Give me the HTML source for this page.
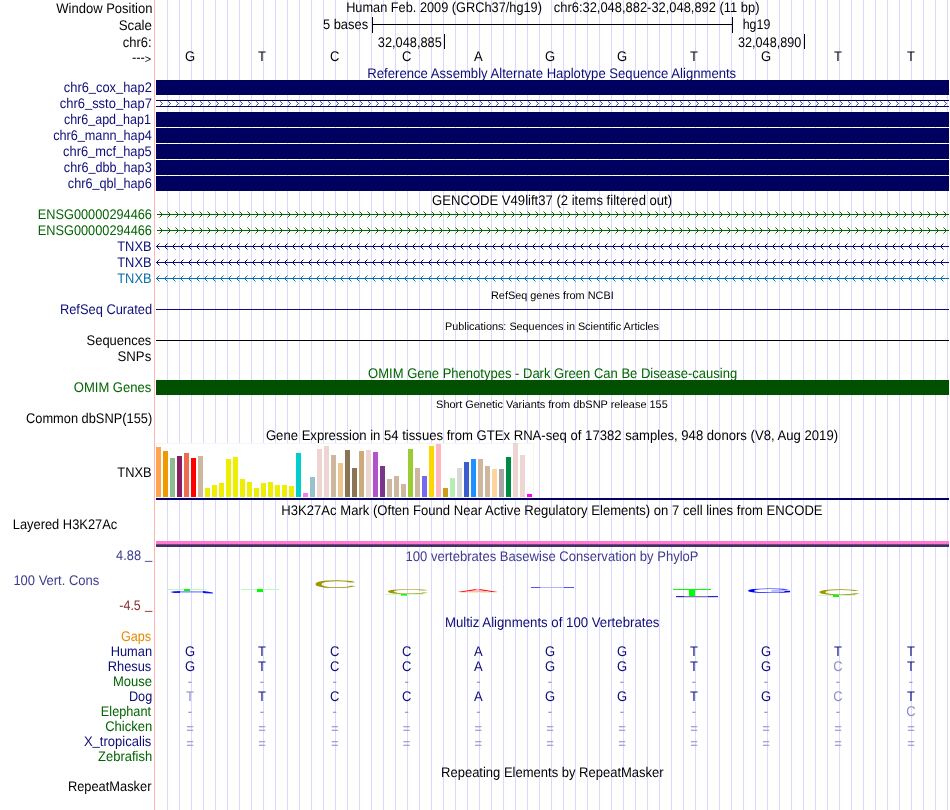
<!DOCTYPE html>
<html lang="en">
<head>
<meta charset="utf-8">
<title>UCSC Genome Browser - hg19 chr6:32,048,882-32,048,892</title>
<style>
html,body{margin:0;padding:0;background:#fff;}
body{width:950px;height:810px;overflow:hidden;}
svg{display:block;font-family:"Liberation Sans", Arial, Helvetica, sans-serif;will-change:transform;text-rendering:geometricPrecision;}
text{white-space:pre;}
</style>
</head>
<body>
<svg width="950" height="810" viewBox="0 0 950 810">
<rect x="0" y="0" width="950" height="810" fill="#fff"/>
<path d="M167.5 0V810M179.5 0V810M191.5 0V810M203.5 0V810M215.5 0V810M227.5 0V810M239.5 0V810M251.5 0V810M263.5 0V810M275.5 0V810M287.5 0V810M299.5 0V810M311.5 0V810M323.5 0V810M335.5 0V810M347.5 0V810M359.5 0V810M371.5 0V810M383.5 0V810M395.5 0V810M407.5 0V810M419.5 0V810M431.5 0V810M443.5 0V810M455.5 0V810M467.5 0V810M479.5 0V810M491.5 0V810M503.5 0V810M515.5 0V810M527.5 0V810M539.5 0V810M551.5 0V810M563.5 0V810M575.5 0V810M587.5 0V810M599.5 0V810M611.5 0V810M623.5 0V810M635.5 0V810M647.5 0V810M659.5 0V810M671.5 0V810M683.5 0V810M695.5 0V810M707.5 0V810M719.5 0V810M731.5 0V810M743.5 0V810M755.5 0V810M767.5 0V810M779.5 0V810M791.5 0V810M803.5 0V810M815.5 0V810M827.5 0V810M839.5 0V810M851.5 0V810M863.5 0V810M875.5 0V810M887.5 0V810M899.5 0V810M911.5 0V810M923.5 0V810M935.5 0V810M947.5 0V810" stroke="#d9d9ff" stroke-width="1" fill="none"/>
<path d="M154.5 0V810" stroke="#ffb4b4" stroke-width="1" fill="none"/>
<text x="56.34" y="13" fill="#000" font-size="14" textLength="96.12" lengthAdjust="spacingAndGlyphs">Window Position</text>
<text x="118.69" y="30" fill="#000" font-size="14" textLength="33.30" lengthAdjust="spacingAndGlyphs">Scale</text>
<text x="122.83" y="47" fill="#000" font-size="14" textLength="28.79" lengthAdjust="spacingAndGlyphs">chr6:</text>
<text x="131.90" y="63" fill="#000" font-size="14" textLength="19.26" lengthAdjust="spacingAndGlyphs"><tspan dy="-0.7">---</tspan><tspan dy="0.4" font-size="11.8">&gt;</tspan></text>
<text x="346.15" y="12" fill="#000" font-size="14" textLength="195.80" lengthAdjust="spacingAndGlyphs">Human Feb. 2009 (GRCh37/hg19)</text>
<text x="553.83" y="12" fill="#000" font-size="14" textLength="205.65" lengthAdjust="spacingAndGlyphs">chr6:32,048,882-32,048,892 (11 bp)</text>
<text x="322.92" y="29" fill="#000" font-size="14" textLength="45.23" lengthAdjust="spacingAndGlyphs">5 bases</text>
<path d="M372.5 17V33M732.5 17V33M372 24.5H733" stroke="#000" stroke-width="1" fill="none"/>
<text x="742.68" y="29" fill="#000" font-size="14" textLength="27.64" lengthAdjust="spacingAndGlyphs">hg19</text>
<text x="377.85" y="47" fill="#000" font-size="14" textLength="63.90" lengthAdjust="spacingAndGlyphs">32,048,885</text>
<path d="M444.5 34V49M804.5 34V49" stroke="#000" stroke-width="1" fill="none"/>
<text x="738.05" y="47" fill="#000" font-size="14" textLength="63.20" lengthAdjust="spacingAndGlyphs">32,048,890</text>
<text x="184.94" y="61" fill="#000" font-size="14" textLength="10.11" lengthAdjust="spacingAndGlyphs">G</text>
<text x="258.03" y="61" fill="#000" font-size="14" textLength="7.94" lengthAdjust="spacingAndGlyphs">T</text>
<text x="330.01" y="61" fill="#000" font-size="14" textLength="9.39" lengthAdjust="spacingAndGlyphs">C</text>
<text x="401.91" y="61" fill="#000" font-size="14" textLength="9.39" lengthAdjust="spacingAndGlyphs">C</text>
<text x="474.06" y="61" fill="#000" font-size="14" textLength="8.67" lengthAdjust="spacingAndGlyphs">A</text>
<text x="544.94" y="61" fill="#000" font-size="14" textLength="10.11" lengthAdjust="spacingAndGlyphs">G</text>
<text x="616.94" y="61" fill="#000" font-size="14" textLength="10.11" lengthAdjust="spacingAndGlyphs">G</text>
<text x="690.03" y="61" fill="#000" font-size="14" textLength="7.94" lengthAdjust="spacingAndGlyphs">T</text>
<text x="760.94" y="61" fill="#000" font-size="14" textLength="10.11" lengthAdjust="spacingAndGlyphs">G</text>
<text x="834.03" y="61" fill="#000" font-size="14" textLength="7.94" lengthAdjust="spacingAndGlyphs">T</text>
<text x="907.03" y="61" fill="#000" font-size="14" textLength="7.94" lengthAdjust="spacingAndGlyphs">T</text>
<text x="367.36" y="77.5" fill="#0c0c78" font-size="14" textLength="368.82" lengthAdjust="spacingAndGlyphs">Reference Assembly Alternate Haplotype Sequence Alignments</text>
<text x="63.83" y="92" fill="#0c0c78" font-size="14" textLength="87.98" lengthAdjust="spacingAndGlyphs">chr6<tspan dy="-1">_</tspan><tspan dy="1">cox</tspan><tspan dy="-1">_</tspan><tspan dy="1">hap2</tspan></text>
<rect x="156" y="80" width="794" height="15" fill="#00005f"/>
<text x="59.78" y="108" fill="#0c0c78" font-size="14" textLength="92.10" lengthAdjust="spacingAndGlyphs">chr6<tspan dy="-1">_</tspan><tspan dy="1">ssto</tspan><tspan dy="-1">_</tspan><tspan dy="1">hap7</tspan></text>
<path d="M156 100.5H950M156 106.5H950" stroke="#00005f" stroke-width="1" fill="none"/>
<path d="M160.0 101.2L162.6 103.5L160.0 105.8M168.0 101.2L170.6 103.5L168.0 105.8M176.0 101.2L178.6 103.5L176.0 105.8M184.0 101.2L186.6 103.5L184.0 105.8M192.0 101.2L194.6 103.5L192.0 105.8M200.0 101.2L202.6 103.5L200.0 105.8M208.0 101.2L210.6 103.5L208.0 105.8M216.0 101.2L218.6 103.5L216.0 105.8M224.0 101.2L226.6 103.5L224.0 105.8M232.0 101.2L234.6 103.5L232.0 105.8M240.0 101.2L242.6 103.5L240.0 105.8M248.0 101.2L250.6 103.5L248.0 105.8M256.0 101.2L258.6 103.5L256.0 105.8M264.0 101.2L266.6 103.5L264.0 105.8M272.0 101.2L274.6 103.5L272.0 105.8M280.0 101.2L282.6 103.5L280.0 105.8M288.0 101.2L290.6 103.5L288.0 105.8M296.0 101.2L298.6 103.5L296.0 105.8M304.0 101.2L306.6 103.5L304.0 105.8M312.0 101.2L314.6 103.5L312.0 105.8M320.0 101.2L322.6 103.5L320.0 105.8M328.0 101.2L330.6 103.5L328.0 105.8M336.0 101.2L338.6 103.5L336.0 105.8M344.0 101.2L346.6 103.5L344.0 105.8M352.0 101.2L354.6 103.5L352.0 105.8M360.0 101.2L362.6 103.5L360.0 105.8M368.0 101.2L370.6 103.5L368.0 105.8M376.0 101.2L378.6 103.5L376.0 105.8M384.0 101.2L386.6 103.5L384.0 105.8M392.0 101.2L394.6 103.5L392.0 105.8M400.0 101.2L402.6 103.5L400.0 105.8M408.0 101.2L410.6 103.5L408.0 105.8M416.0 101.2L418.6 103.5L416.0 105.8M424.0 101.2L426.6 103.5L424.0 105.8M432.0 101.2L434.6 103.5L432.0 105.8M440.0 101.2L442.6 103.5L440.0 105.8M448.0 101.2L450.6 103.5L448.0 105.8M456.0 101.2L458.6 103.5L456.0 105.8M464.0 101.2L466.6 103.5L464.0 105.8M472.0 101.2L474.6 103.5L472.0 105.8M480.0 101.2L482.6 103.5L480.0 105.8M488.0 101.2L490.6 103.5L488.0 105.8M496.0 101.2L498.6 103.5L496.0 105.8M504.0 101.2L506.6 103.5L504.0 105.8M512.0 101.2L514.6 103.5L512.0 105.8M520.0 101.2L522.6 103.5L520.0 105.8M528.0 101.2L530.6 103.5L528.0 105.8M536.0 101.2L538.6 103.5L536.0 105.8M544.0 101.2L546.6 103.5L544.0 105.8M552.0 101.2L554.6 103.5L552.0 105.8M560.0 101.2L562.6 103.5L560.0 105.8M568.0 101.2L570.6 103.5L568.0 105.8M576.0 101.2L578.6 103.5L576.0 105.8M584.0 101.2L586.6 103.5L584.0 105.8M592.0 101.2L594.6 103.5L592.0 105.8M600.0 101.2L602.6 103.5L600.0 105.8M608.0 101.2L610.6 103.5L608.0 105.8M616.0 101.2L618.6 103.5L616.0 105.8M624.0 101.2L626.6 103.5L624.0 105.8M632.0 101.2L634.6 103.5L632.0 105.8M640.0 101.2L642.6 103.5L640.0 105.8M648.0 101.2L650.6 103.5L648.0 105.8M656.0 101.2L658.6 103.5L656.0 105.8M664.0 101.2L666.6 103.5L664.0 105.8M672.0 101.2L674.6 103.5L672.0 105.8M680.0 101.2L682.6 103.5L680.0 105.8M688.0 101.2L690.6 103.5L688.0 105.8M696.0 101.2L698.6 103.5L696.0 105.8M704.0 101.2L706.6 103.5L704.0 105.8M712.0 101.2L714.6 103.5L712.0 105.8M720.0 101.2L722.6 103.5L720.0 105.8M728.0 101.2L730.6 103.5L728.0 105.8M736.0 101.2L738.6 103.5L736.0 105.8M744.0 101.2L746.6 103.5L744.0 105.8M752.0 101.2L754.6 103.5L752.0 105.8M760.0 101.2L762.6 103.5L760.0 105.8M768.0 101.2L770.6 103.5L768.0 105.8M776.0 101.2L778.6 103.5L776.0 105.8M784.0 101.2L786.6 103.5L784.0 105.8M792.0 101.2L794.6 103.5L792.0 105.8M800.0 101.2L802.6 103.5L800.0 105.8M808.0 101.2L810.6 103.5L808.0 105.8M816.0 101.2L818.6 103.5L816.0 105.8M824.0 101.2L826.6 103.5L824.0 105.8M832.0 101.2L834.6 103.5L832.0 105.8M840.0 101.2L842.6 103.5L840.0 105.8M848.0 101.2L850.6 103.5L848.0 105.8M856.0 101.2L858.6 103.5L856.0 105.8M864.0 101.2L866.6 103.5L864.0 105.8M872.0 101.2L874.6 103.5L872.0 105.8M880.0 101.2L882.6 103.5L880.0 105.8M888.0 101.2L890.6 103.5L888.0 105.8M896.0 101.2L898.6 103.5L896.0 105.8M904.0 101.2L906.6 103.5L904.0 105.8M912.0 101.2L914.6 103.5L912.0 105.8M920.0 101.2L922.6 103.5L920.0 105.8M928.0 101.2L930.6 103.5L928.0 105.8M936.0 101.2L938.6 103.5L936.0 105.8M944.0 101.2L946.6 103.5L944.0 105.8" stroke="#00005f" stroke-width="0.68" fill="none"/>
<text x="63.90" y="124" fill="#0c0c78" font-size="14" textLength="86.98" lengthAdjust="spacingAndGlyphs">chr6<tspan dy="-1">_</tspan><tspan dy="1">apd</tspan><tspan dy="-1">_</tspan><tspan dy="1">hap1</tspan></text>
<rect x="156" y="112" width="794" height="15" fill="#00005f"/>
<text x="53.13" y="140" fill="#0c0c78" font-size="14" textLength="98.64" lengthAdjust="spacingAndGlyphs">chr6<tspan dy="-1">_</tspan><tspan dy="1">mann</tspan><tspan dy="-1">_</tspan><tspan dy="1">hap4</tspan></text>
<rect x="156" y="128" width="794" height="15" fill="#00005f"/>
<text x="63.12" y="156" fill="#0c0c78" font-size="14" textLength="88.60" lengthAdjust="spacingAndGlyphs">chr6<tspan dy="-1">_</tspan><tspan dy="1">mcf</tspan><tspan dy="-1">_</tspan><tspan dy="1">hap5</tspan></text>
<rect x="156" y="144" width="794" height="15" fill="#00005f"/>
<text x="63.86" y="172" fill="#0c0c78" font-size="14" textLength="87.82" lengthAdjust="spacingAndGlyphs">chr6<tspan dy="-1">_</tspan><tspan dy="1">dbb</tspan><tspan dy="-1">_</tspan><tspan dy="1">hap3</tspan></text>
<rect x="156" y="160" width="794" height="15" fill="#00005f"/>
<text x="67.85" y="188" fill="#0c0c78" font-size="14" textLength="83.85" lengthAdjust="spacingAndGlyphs">chr6<tspan dy="-1">_</tspan><tspan dy="1">qbl</tspan><tspan dy="-1">_</tspan><tspan dy="1">hap6</tspan></text>
<rect x="156" y="176" width="794" height="15" fill="#00005f"/>
<text x="432.03" y="204.5" fill="#000" font-size="14" textLength="240.10" lengthAdjust="spacingAndGlyphs">GENCODE V49lift37 (2 items filtered out)</text>
<text x="37.74" y="218.6" fill="#006400" font-size="14" textLength="114.24" lengthAdjust="spacingAndGlyphs">ENSG00000294466</text>
<path d="M157 214.5H950" stroke="#006400" stroke-width="1" fill="none"/>
<path d="M159.5 211.5L162.5 214.5L159.5 217.5M167.5 211.5L170.5 214.5L167.5 217.5M175.5 211.5L178.5 214.5L175.5 217.5M183.5 211.5L186.5 214.5L183.5 217.5M191.5 211.5L194.5 214.5L191.5 217.5M199.5 211.5L202.5 214.5L199.5 217.5M207.5 211.5L210.5 214.5L207.5 217.5M215.5 211.5L218.5 214.5L215.5 217.5M223.5 211.5L226.5 214.5L223.5 217.5M231.5 211.5L234.5 214.5L231.5 217.5M239.5 211.5L242.5 214.5L239.5 217.5M247.5 211.5L250.5 214.5L247.5 217.5M255.5 211.5L258.5 214.5L255.5 217.5M263.5 211.5L266.5 214.5L263.5 217.5M271.5 211.5L274.5 214.5L271.5 217.5M279.5 211.5L282.5 214.5L279.5 217.5M287.5 211.5L290.5 214.5L287.5 217.5M295.5 211.5L298.5 214.5L295.5 217.5M303.5 211.5L306.5 214.5L303.5 217.5M311.5 211.5L314.5 214.5L311.5 217.5M319.5 211.5L322.5 214.5L319.5 217.5M327.5 211.5L330.5 214.5L327.5 217.5M335.5 211.5L338.5 214.5L335.5 217.5M343.5 211.5L346.5 214.5L343.5 217.5M351.5 211.5L354.5 214.5L351.5 217.5M359.5 211.5L362.5 214.5L359.5 217.5M367.5 211.5L370.5 214.5L367.5 217.5M375.5 211.5L378.5 214.5L375.5 217.5M383.5 211.5L386.5 214.5L383.5 217.5M391.5 211.5L394.5 214.5L391.5 217.5M399.5 211.5L402.5 214.5L399.5 217.5M407.5 211.5L410.5 214.5L407.5 217.5M415.5 211.5L418.5 214.5L415.5 217.5M423.5 211.5L426.5 214.5L423.5 217.5M431.5 211.5L434.5 214.5L431.5 217.5M439.5 211.5L442.5 214.5L439.5 217.5M447.5 211.5L450.5 214.5L447.5 217.5M455.5 211.5L458.5 214.5L455.5 217.5M463.5 211.5L466.5 214.5L463.5 217.5M471.5 211.5L474.5 214.5L471.5 217.5M479.5 211.5L482.5 214.5L479.5 217.5M487.5 211.5L490.5 214.5L487.5 217.5M495.5 211.5L498.5 214.5L495.5 217.5M503.5 211.5L506.5 214.5L503.5 217.5M511.5 211.5L514.5 214.5L511.5 217.5M519.5 211.5L522.5 214.5L519.5 217.5M527.5 211.5L530.5 214.5L527.5 217.5M535.5 211.5L538.5 214.5L535.5 217.5M543.5 211.5L546.5 214.5L543.5 217.5M551.5 211.5L554.5 214.5L551.5 217.5M559.5 211.5L562.5 214.5L559.5 217.5M567.5 211.5L570.5 214.5L567.5 217.5M575.5 211.5L578.5 214.5L575.5 217.5M583.5 211.5L586.5 214.5L583.5 217.5M591.5 211.5L594.5 214.5L591.5 217.5M599.5 211.5L602.5 214.5L599.5 217.5M607.5 211.5L610.5 214.5L607.5 217.5M615.5 211.5L618.5 214.5L615.5 217.5M623.5 211.5L626.5 214.5L623.5 217.5M631.5 211.5L634.5 214.5L631.5 217.5M639.5 211.5L642.5 214.5L639.5 217.5M647.5 211.5L650.5 214.5L647.5 217.5M655.5 211.5L658.5 214.5L655.5 217.5M663.5 211.5L666.5 214.5L663.5 217.5M671.5 211.5L674.5 214.5L671.5 217.5M679.5 211.5L682.5 214.5L679.5 217.5M687.5 211.5L690.5 214.5L687.5 217.5M695.5 211.5L698.5 214.5L695.5 217.5M703.5 211.5L706.5 214.5L703.5 217.5M711.5 211.5L714.5 214.5L711.5 217.5M719.5 211.5L722.5 214.5L719.5 217.5M727.5 211.5L730.5 214.5L727.5 217.5M735.5 211.5L738.5 214.5L735.5 217.5M743.5 211.5L746.5 214.5L743.5 217.5M751.5 211.5L754.5 214.5L751.5 217.5M759.5 211.5L762.5 214.5L759.5 217.5M767.5 211.5L770.5 214.5L767.5 217.5M775.5 211.5L778.5 214.5L775.5 217.5M783.5 211.5L786.5 214.5L783.5 217.5M791.5 211.5L794.5 214.5L791.5 217.5M799.5 211.5L802.5 214.5L799.5 217.5M807.5 211.5L810.5 214.5L807.5 217.5M815.5 211.5L818.5 214.5L815.5 217.5M823.5 211.5L826.5 214.5L823.5 217.5M831.5 211.5L834.5 214.5L831.5 217.5M839.5 211.5L842.5 214.5L839.5 217.5M847.5 211.5L850.5 214.5L847.5 217.5M855.5 211.5L858.5 214.5L855.5 217.5M863.5 211.5L866.5 214.5L863.5 217.5M871.5 211.5L874.5 214.5L871.5 217.5M879.5 211.5L882.5 214.5L879.5 217.5M887.5 211.5L890.5 214.5L887.5 217.5M895.5 211.5L898.5 214.5L895.5 217.5M903.5 211.5L906.5 214.5L903.5 217.5M911.5 211.5L914.5 214.5L911.5 217.5M919.5 211.5L922.5 214.5L919.5 217.5M927.5 211.5L930.5 214.5L927.5 217.5M935.5 211.5L938.5 214.5L935.5 217.5M943.5 211.5L946.5 214.5L943.5 217.5" stroke="#006400" stroke-width="1" fill="none"/>
<text x="37.74" y="234.6" fill="#006400" font-size="14" textLength="114.24" lengthAdjust="spacingAndGlyphs">ENSG00000294466</text>
<path d="M157 230.5H950" stroke="#006400" stroke-width="1" fill="none"/>
<path d="M159.5 227.5L162.5 230.5L159.5 233.5M167.5 227.5L170.5 230.5L167.5 233.5M175.5 227.5L178.5 230.5L175.5 233.5M183.5 227.5L186.5 230.5L183.5 233.5M191.5 227.5L194.5 230.5L191.5 233.5M199.5 227.5L202.5 230.5L199.5 233.5M207.5 227.5L210.5 230.5L207.5 233.5M215.5 227.5L218.5 230.5L215.5 233.5M223.5 227.5L226.5 230.5L223.5 233.5M231.5 227.5L234.5 230.5L231.5 233.5M239.5 227.5L242.5 230.5L239.5 233.5M247.5 227.5L250.5 230.5L247.5 233.5M255.5 227.5L258.5 230.5L255.5 233.5M263.5 227.5L266.5 230.5L263.5 233.5M271.5 227.5L274.5 230.5L271.5 233.5M279.5 227.5L282.5 230.5L279.5 233.5M287.5 227.5L290.5 230.5L287.5 233.5M295.5 227.5L298.5 230.5L295.5 233.5M303.5 227.5L306.5 230.5L303.5 233.5M311.5 227.5L314.5 230.5L311.5 233.5M319.5 227.5L322.5 230.5L319.5 233.5M327.5 227.5L330.5 230.5L327.5 233.5M335.5 227.5L338.5 230.5L335.5 233.5M343.5 227.5L346.5 230.5L343.5 233.5M351.5 227.5L354.5 230.5L351.5 233.5M359.5 227.5L362.5 230.5L359.5 233.5M367.5 227.5L370.5 230.5L367.5 233.5M375.5 227.5L378.5 230.5L375.5 233.5M383.5 227.5L386.5 230.5L383.5 233.5M391.5 227.5L394.5 230.5L391.5 233.5M399.5 227.5L402.5 230.5L399.5 233.5M407.5 227.5L410.5 230.5L407.5 233.5M415.5 227.5L418.5 230.5L415.5 233.5M423.5 227.5L426.5 230.5L423.5 233.5M431.5 227.5L434.5 230.5L431.5 233.5M439.5 227.5L442.5 230.5L439.5 233.5M447.5 227.5L450.5 230.5L447.5 233.5M455.5 227.5L458.5 230.5L455.5 233.5M463.5 227.5L466.5 230.5L463.5 233.5M471.5 227.5L474.5 230.5L471.5 233.5M479.5 227.5L482.5 230.5L479.5 233.5M487.5 227.5L490.5 230.5L487.5 233.5M495.5 227.5L498.5 230.5L495.5 233.5M503.5 227.5L506.5 230.5L503.5 233.5M511.5 227.5L514.5 230.5L511.5 233.5M519.5 227.5L522.5 230.5L519.5 233.5M527.5 227.5L530.5 230.5L527.5 233.5M535.5 227.5L538.5 230.5L535.5 233.5M543.5 227.5L546.5 230.5L543.5 233.5M551.5 227.5L554.5 230.5L551.5 233.5M559.5 227.5L562.5 230.5L559.5 233.5M567.5 227.5L570.5 230.5L567.5 233.5M575.5 227.5L578.5 230.5L575.5 233.5M583.5 227.5L586.5 230.5L583.5 233.5M591.5 227.5L594.5 230.5L591.5 233.5M599.5 227.5L602.5 230.5L599.5 233.5M607.5 227.5L610.5 230.5L607.5 233.5M615.5 227.5L618.5 230.5L615.5 233.5M623.5 227.5L626.5 230.5L623.5 233.5M631.5 227.5L634.5 230.5L631.5 233.5M639.5 227.5L642.5 230.5L639.5 233.5M647.5 227.5L650.5 230.5L647.5 233.5M655.5 227.5L658.5 230.5L655.5 233.5M663.5 227.5L666.5 230.5L663.5 233.5M671.5 227.5L674.5 230.5L671.5 233.5M679.5 227.5L682.5 230.5L679.5 233.5M687.5 227.5L690.5 230.5L687.5 233.5M695.5 227.5L698.5 230.5L695.5 233.5M703.5 227.5L706.5 230.5L703.5 233.5M711.5 227.5L714.5 230.5L711.5 233.5M719.5 227.5L722.5 230.5L719.5 233.5M727.5 227.5L730.5 230.5L727.5 233.5M735.5 227.5L738.5 230.5L735.5 233.5M743.5 227.5L746.5 230.5L743.5 233.5M751.5 227.5L754.5 230.5L751.5 233.5M759.5 227.5L762.5 230.5L759.5 233.5M767.5 227.5L770.5 230.5L767.5 233.5M775.5 227.5L778.5 230.5L775.5 233.5M783.5 227.5L786.5 230.5L783.5 233.5M791.5 227.5L794.5 230.5L791.5 233.5M799.5 227.5L802.5 230.5L799.5 233.5M807.5 227.5L810.5 230.5L807.5 233.5M815.5 227.5L818.5 230.5L815.5 233.5M823.5 227.5L826.5 230.5L823.5 233.5M831.5 227.5L834.5 230.5L831.5 233.5M839.5 227.5L842.5 230.5L839.5 233.5M847.5 227.5L850.5 230.5L847.5 233.5M855.5 227.5L858.5 230.5L855.5 233.5M863.5 227.5L866.5 230.5L863.5 233.5M871.5 227.5L874.5 230.5L871.5 233.5M879.5 227.5L882.5 230.5L879.5 233.5M887.5 227.5L890.5 230.5L887.5 233.5M895.5 227.5L898.5 230.5L895.5 233.5M903.5 227.5L906.5 230.5L903.5 233.5M911.5 227.5L914.5 230.5L911.5 233.5M919.5 227.5L922.5 230.5L919.5 233.5M927.5 227.5L930.5 230.5L927.5 233.5M935.5 227.5L938.5 230.5L935.5 233.5M943.5 227.5L946.5 230.5L943.5 233.5" stroke="#006400" stroke-width="1" fill="none"/>
<text x="117.24" y="250.6" fill="#0c0c78" font-size="14" textLength="34.30" lengthAdjust="spacingAndGlyphs">TNXB</text>
<path d="M156 246.5H950" stroke="#0c0c78" stroke-width="1" fill="none"/>
<path d="M159.5 243.5L156.5 246.5L159.5 249.5M167.5 243.5L164.5 246.5L167.5 249.5M175.5 243.5L172.5 246.5L175.5 249.5M183.5 243.5L180.5 246.5L183.5 249.5M191.5 243.5L188.5 246.5L191.5 249.5M199.5 243.5L196.5 246.5L199.5 249.5M207.5 243.5L204.5 246.5L207.5 249.5M215.5 243.5L212.5 246.5L215.5 249.5M223.5 243.5L220.5 246.5L223.5 249.5M231.5 243.5L228.5 246.5L231.5 249.5M239.5 243.5L236.5 246.5L239.5 249.5M247.5 243.5L244.5 246.5L247.5 249.5M255.5 243.5L252.5 246.5L255.5 249.5M263.5 243.5L260.5 246.5L263.5 249.5M271.5 243.5L268.5 246.5L271.5 249.5M279.5 243.5L276.5 246.5L279.5 249.5M287.5 243.5L284.5 246.5L287.5 249.5M295.5 243.5L292.5 246.5L295.5 249.5M303.5 243.5L300.5 246.5L303.5 249.5M311.5 243.5L308.5 246.5L311.5 249.5M319.5 243.5L316.5 246.5L319.5 249.5M327.5 243.5L324.5 246.5L327.5 249.5M335.5 243.5L332.5 246.5L335.5 249.5M343.5 243.5L340.5 246.5L343.5 249.5M351.5 243.5L348.5 246.5L351.5 249.5M359.5 243.5L356.5 246.5L359.5 249.5M367.5 243.5L364.5 246.5L367.5 249.5M375.5 243.5L372.5 246.5L375.5 249.5M383.5 243.5L380.5 246.5L383.5 249.5M391.5 243.5L388.5 246.5L391.5 249.5M399.5 243.5L396.5 246.5L399.5 249.5M407.5 243.5L404.5 246.5L407.5 249.5M415.5 243.5L412.5 246.5L415.5 249.5M423.5 243.5L420.5 246.5L423.5 249.5M431.5 243.5L428.5 246.5L431.5 249.5M439.5 243.5L436.5 246.5L439.5 249.5M447.5 243.5L444.5 246.5L447.5 249.5M455.5 243.5L452.5 246.5L455.5 249.5M463.5 243.5L460.5 246.5L463.5 249.5M471.5 243.5L468.5 246.5L471.5 249.5M479.5 243.5L476.5 246.5L479.5 249.5M487.5 243.5L484.5 246.5L487.5 249.5M495.5 243.5L492.5 246.5L495.5 249.5M503.5 243.5L500.5 246.5L503.5 249.5M511.5 243.5L508.5 246.5L511.5 249.5M519.5 243.5L516.5 246.5L519.5 249.5M527.5 243.5L524.5 246.5L527.5 249.5M535.5 243.5L532.5 246.5L535.5 249.5M543.5 243.5L540.5 246.5L543.5 249.5M551.5 243.5L548.5 246.5L551.5 249.5M559.5 243.5L556.5 246.5L559.5 249.5M567.5 243.5L564.5 246.5L567.5 249.5M575.5 243.5L572.5 246.5L575.5 249.5M583.5 243.5L580.5 246.5L583.5 249.5M591.5 243.5L588.5 246.5L591.5 249.5M599.5 243.5L596.5 246.5L599.5 249.5M607.5 243.5L604.5 246.5L607.5 249.5M615.5 243.5L612.5 246.5L615.5 249.5M623.5 243.5L620.5 246.5L623.5 249.5M631.5 243.5L628.5 246.5L631.5 249.5M639.5 243.5L636.5 246.5L639.5 249.5M647.5 243.5L644.5 246.5L647.5 249.5M655.5 243.5L652.5 246.5L655.5 249.5M663.5 243.5L660.5 246.5L663.5 249.5M671.5 243.5L668.5 246.5L671.5 249.5M679.5 243.5L676.5 246.5L679.5 249.5M687.5 243.5L684.5 246.5L687.5 249.5M695.5 243.5L692.5 246.5L695.5 249.5M703.5 243.5L700.5 246.5L703.5 249.5M711.5 243.5L708.5 246.5L711.5 249.5M719.5 243.5L716.5 246.5L719.5 249.5M727.5 243.5L724.5 246.5L727.5 249.5M735.5 243.5L732.5 246.5L735.5 249.5M743.5 243.5L740.5 246.5L743.5 249.5M751.5 243.5L748.5 246.5L751.5 249.5M759.5 243.5L756.5 246.5L759.5 249.5M767.5 243.5L764.5 246.5L767.5 249.5M775.5 243.5L772.5 246.5L775.5 249.5M783.5 243.5L780.5 246.5L783.5 249.5M791.5 243.5L788.5 246.5L791.5 249.5M799.5 243.5L796.5 246.5L799.5 249.5M807.5 243.5L804.5 246.5L807.5 249.5M815.5 243.5L812.5 246.5L815.5 249.5M823.5 243.5L820.5 246.5L823.5 249.5M831.5 243.5L828.5 246.5L831.5 249.5M839.5 243.5L836.5 246.5L839.5 249.5M847.5 243.5L844.5 246.5L847.5 249.5M855.5 243.5L852.5 246.5L855.5 249.5M863.5 243.5L860.5 246.5L863.5 249.5M871.5 243.5L868.5 246.5L871.5 249.5M879.5 243.5L876.5 246.5L879.5 249.5M887.5 243.5L884.5 246.5L887.5 249.5M895.5 243.5L892.5 246.5L895.5 249.5M903.5 243.5L900.5 246.5L903.5 249.5M911.5 243.5L908.5 246.5L911.5 249.5M919.5 243.5L916.5 246.5L919.5 249.5M927.5 243.5L924.5 246.5L927.5 249.5M935.5 243.5L932.5 246.5L935.5 249.5M943.5 243.5L940.5 246.5L943.5 249.5M951.5 243.5L948.5 246.5L951.5 249.5" stroke="#0c0c78" stroke-width="1" fill="none"/>
<text x="117.24" y="266.6" fill="#0c0c78" font-size="14" textLength="34.30" lengthAdjust="spacingAndGlyphs">TNXB</text>
<path d="M156 262.5H950" stroke="#0c0c78" stroke-width="1" fill="none"/>
<path d="M159.5 259.5L156.5 262.5L159.5 265.5M167.5 259.5L164.5 262.5L167.5 265.5M175.5 259.5L172.5 262.5L175.5 265.5M183.5 259.5L180.5 262.5L183.5 265.5M191.5 259.5L188.5 262.5L191.5 265.5M199.5 259.5L196.5 262.5L199.5 265.5M207.5 259.5L204.5 262.5L207.5 265.5M215.5 259.5L212.5 262.5L215.5 265.5M223.5 259.5L220.5 262.5L223.5 265.5M231.5 259.5L228.5 262.5L231.5 265.5M239.5 259.5L236.5 262.5L239.5 265.5M247.5 259.5L244.5 262.5L247.5 265.5M255.5 259.5L252.5 262.5L255.5 265.5M263.5 259.5L260.5 262.5L263.5 265.5M271.5 259.5L268.5 262.5L271.5 265.5M279.5 259.5L276.5 262.5L279.5 265.5M287.5 259.5L284.5 262.5L287.5 265.5M295.5 259.5L292.5 262.5L295.5 265.5M303.5 259.5L300.5 262.5L303.5 265.5M311.5 259.5L308.5 262.5L311.5 265.5M319.5 259.5L316.5 262.5L319.5 265.5M327.5 259.5L324.5 262.5L327.5 265.5M335.5 259.5L332.5 262.5L335.5 265.5M343.5 259.5L340.5 262.5L343.5 265.5M351.5 259.5L348.5 262.5L351.5 265.5M359.5 259.5L356.5 262.5L359.5 265.5M367.5 259.5L364.5 262.5L367.5 265.5M375.5 259.5L372.5 262.5L375.5 265.5M383.5 259.5L380.5 262.5L383.5 265.5M391.5 259.5L388.5 262.5L391.5 265.5M399.5 259.5L396.5 262.5L399.5 265.5M407.5 259.5L404.5 262.5L407.5 265.5M415.5 259.5L412.5 262.5L415.5 265.5M423.5 259.5L420.5 262.5L423.5 265.5M431.5 259.5L428.5 262.5L431.5 265.5M439.5 259.5L436.5 262.5L439.5 265.5M447.5 259.5L444.5 262.5L447.5 265.5M455.5 259.5L452.5 262.5L455.5 265.5M463.5 259.5L460.5 262.5L463.5 265.5M471.5 259.5L468.5 262.5L471.5 265.5M479.5 259.5L476.5 262.5L479.5 265.5M487.5 259.5L484.5 262.5L487.5 265.5M495.5 259.5L492.5 262.5L495.5 265.5M503.5 259.5L500.5 262.5L503.5 265.5M511.5 259.5L508.5 262.5L511.5 265.5M519.5 259.5L516.5 262.5L519.5 265.5M527.5 259.5L524.5 262.5L527.5 265.5M535.5 259.5L532.5 262.5L535.5 265.5M543.5 259.5L540.5 262.5L543.5 265.5M551.5 259.5L548.5 262.5L551.5 265.5M559.5 259.5L556.5 262.5L559.5 265.5M567.5 259.5L564.5 262.5L567.5 265.5M575.5 259.5L572.5 262.5L575.5 265.5M583.5 259.5L580.5 262.5L583.5 265.5M591.5 259.5L588.5 262.5L591.5 265.5M599.5 259.5L596.5 262.5L599.5 265.5M607.5 259.5L604.5 262.5L607.5 265.5M615.5 259.5L612.5 262.5L615.5 265.5M623.5 259.5L620.5 262.5L623.5 265.5M631.5 259.5L628.5 262.5L631.5 265.5M639.5 259.5L636.5 262.5L639.5 265.5M647.5 259.5L644.5 262.5L647.5 265.5M655.5 259.5L652.5 262.5L655.5 265.5M663.5 259.5L660.5 262.5L663.5 265.5M671.5 259.5L668.5 262.5L671.5 265.5M679.5 259.5L676.5 262.5L679.5 265.5M687.5 259.5L684.5 262.5L687.5 265.5M695.5 259.5L692.5 262.5L695.5 265.5M703.5 259.5L700.5 262.5L703.5 265.5M711.5 259.5L708.5 262.5L711.5 265.5M719.5 259.5L716.5 262.5L719.5 265.5M727.5 259.5L724.5 262.5L727.5 265.5M735.5 259.5L732.5 262.5L735.5 265.5M743.5 259.5L740.5 262.5L743.5 265.5M751.5 259.5L748.5 262.5L751.5 265.5M759.5 259.5L756.5 262.5L759.5 265.5M767.5 259.5L764.5 262.5L767.5 265.5M775.5 259.5L772.5 262.5L775.5 265.5M783.5 259.5L780.5 262.5L783.5 265.5M791.5 259.5L788.5 262.5L791.5 265.5M799.5 259.5L796.5 262.5L799.5 265.5M807.5 259.5L804.5 262.5L807.5 265.5M815.5 259.5L812.5 262.5L815.5 265.5M823.5 259.5L820.5 262.5L823.5 265.5M831.5 259.5L828.5 262.5L831.5 265.5M839.5 259.5L836.5 262.5L839.5 265.5M847.5 259.5L844.5 262.5L847.5 265.5M855.5 259.5L852.5 262.5L855.5 265.5M863.5 259.5L860.5 262.5L863.5 265.5M871.5 259.5L868.5 262.5L871.5 265.5M879.5 259.5L876.5 262.5L879.5 265.5M887.5 259.5L884.5 262.5L887.5 265.5M895.5 259.5L892.5 262.5L895.5 265.5M903.5 259.5L900.5 262.5L903.5 265.5M911.5 259.5L908.5 262.5L911.5 265.5M919.5 259.5L916.5 262.5L919.5 265.5M927.5 259.5L924.5 262.5L927.5 265.5M935.5 259.5L932.5 262.5L935.5 265.5M943.5 259.5L940.5 262.5L943.5 265.5M951.5 259.5L948.5 262.5L951.5 265.5" stroke="#0c0c78" stroke-width="1" fill="none"/>
<text x="117.24" y="282.6" fill="#0a6eaa" font-size="14" textLength="34.30" lengthAdjust="spacingAndGlyphs">TNXB</text>
<path d="M156 278.5H950" stroke="#0a6eaa" stroke-width="1" fill="none"/>
<path d="M159.5 275.5L156.5 278.5L159.5 281.5M167.5 275.5L164.5 278.5L167.5 281.5M175.5 275.5L172.5 278.5L175.5 281.5M183.5 275.5L180.5 278.5L183.5 281.5M191.5 275.5L188.5 278.5L191.5 281.5M199.5 275.5L196.5 278.5L199.5 281.5M207.5 275.5L204.5 278.5L207.5 281.5M215.5 275.5L212.5 278.5L215.5 281.5M223.5 275.5L220.5 278.5L223.5 281.5M231.5 275.5L228.5 278.5L231.5 281.5M239.5 275.5L236.5 278.5L239.5 281.5M247.5 275.5L244.5 278.5L247.5 281.5M255.5 275.5L252.5 278.5L255.5 281.5M263.5 275.5L260.5 278.5L263.5 281.5M271.5 275.5L268.5 278.5L271.5 281.5M279.5 275.5L276.5 278.5L279.5 281.5M287.5 275.5L284.5 278.5L287.5 281.5M295.5 275.5L292.5 278.5L295.5 281.5M303.5 275.5L300.5 278.5L303.5 281.5M311.5 275.5L308.5 278.5L311.5 281.5M319.5 275.5L316.5 278.5L319.5 281.5M327.5 275.5L324.5 278.5L327.5 281.5M335.5 275.5L332.5 278.5L335.5 281.5M343.5 275.5L340.5 278.5L343.5 281.5M351.5 275.5L348.5 278.5L351.5 281.5M359.5 275.5L356.5 278.5L359.5 281.5M367.5 275.5L364.5 278.5L367.5 281.5M375.5 275.5L372.5 278.5L375.5 281.5M383.5 275.5L380.5 278.5L383.5 281.5M391.5 275.5L388.5 278.5L391.5 281.5M399.5 275.5L396.5 278.5L399.5 281.5M407.5 275.5L404.5 278.5L407.5 281.5M415.5 275.5L412.5 278.5L415.5 281.5M423.5 275.5L420.5 278.5L423.5 281.5M431.5 275.5L428.5 278.5L431.5 281.5M439.5 275.5L436.5 278.5L439.5 281.5M447.5 275.5L444.5 278.5L447.5 281.5M455.5 275.5L452.5 278.5L455.5 281.5M463.5 275.5L460.5 278.5L463.5 281.5M471.5 275.5L468.5 278.5L471.5 281.5M479.5 275.5L476.5 278.5L479.5 281.5M487.5 275.5L484.5 278.5L487.5 281.5M495.5 275.5L492.5 278.5L495.5 281.5M503.5 275.5L500.5 278.5L503.5 281.5M511.5 275.5L508.5 278.5L511.5 281.5M519.5 275.5L516.5 278.5L519.5 281.5M527.5 275.5L524.5 278.5L527.5 281.5M535.5 275.5L532.5 278.5L535.5 281.5M543.5 275.5L540.5 278.5L543.5 281.5M551.5 275.5L548.5 278.5L551.5 281.5M559.5 275.5L556.5 278.5L559.5 281.5M567.5 275.5L564.5 278.5L567.5 281.5M575.5 275.5L572.5 278.5L575.5 281.5M583.5 275.5L580.5 278.5L583.5 281.5M591.5 275.5L588.5 278.5L591.5 281.5M599.5 275.5L596.5 278.5L599.5 281.5M607.5 275.5L604.5 278.5L607.5 281.5M615.5 275.5L612.5 278.5L615.5 281.5M623.5 275.5L620.5 278.5L623.5 281.5M631.5 275.5L628.5 278.5L631.5 281.5M639.5 275.5L636.5 278.5L639.5 281.5M647.5 275.5L644.5 278.5L647.5 281.5M655.5 275.5L652.5 278.5L655.5 281.5M663.5 275.5L660.5 278.5L663.5 281.5M671.5 275.5L668.5 278.5L671.5 281.5M679.5 275.5L676.5 278.5L679.5 281.5M687.5 275.5L684.5 278.5L687.5 281.5M695.5 275.5L692.5 278.5L695.5 281.5M703.5 275.5L700.5 278.5L703.5 281.5M711.5 275.5L708.5 278.5L711.5 281.5M719.5 275.5L716.5 278.5L719.5 281.5M727.5 275.5L724.5 278.5L727.5 281.5M735.5 275.5L732.5 278.5L735.5 281.5M743.5 275.5L740.5 278.5L743.5 281.5M751.5 275.5L748.5 278.5L751.5 281.5M759.5 275.5L756.5 278.5L759.5 281.5M767.5 275.5L764.5 278.5L767.5 281.5M775.5 275.5L772.5 278.5L775.5 281.5M783.5 275.5L780.5 278.5L783.5 281.5M791.5 275.5L788.5 278.5L791.5 281.5M799.5 275.5L796.5 278.5L799.5 281.5M807.5 275.5L804.5 278.5L807.5 281.5M815.5 275.5L812.5 278.5L815.5 281.5M823.5 275.5L820.5 278.5L823.5 281.5M831.5 275.5L828.5 278.5L831.5 281.5M839.5 275.5L836.5 278.5L839.5 281.5M847.5 275.5L844.5 278.5L847.5 281.5M855.5 275.5L852.5 278.5L855.5 281.5M863.5 275.5L860.5 278.5L863.5 281.5M871.5 275.5L868.5 278.5L871.5 281.5M879.5 275.5L876.5 278.5L879.5 281.5M887.5 275.5L884.5 278.5L887.5 281.5M895.5 275.5L892.5 278.5L895.5 281.5M903.5 275.5L900.5 278.5L903.5 281.5M911.5 275.5L908.5 278.5L911.5 281.5M919.5 275.5L916.5 278.5L919.5 281.5M927.5 275.5L924.5 278.5L927.5 281.5M935.5 275.5L932.5 278.5L935.5 281.5M943.5 275.5L940.5 278.5L943.5 281.5M951.5 275.5L948.5 278.5L951.5 281.5" stroke="#0a6eaa" stroke-width="1" fill="none"/>
<text x="491.00" y="298.8" fill="#000" font-size="10.9" textLength="122.68" lengthAdjust="spacingAndGlyphs">RefSeq genes from NCBI</text>
<text x="59.91" y="314" fill="#0c0c78" font-size="14" textLength="92.24" lengthAdjust="spacingAndGlyphs">RefSeq Curated</text>
<path d="M156 309.5H950" stroke="#0c0c78" stroke-width="1" fill="none"/>
<text x="445.09" y="329.7" fill="#000" font-size="10.9" textLength="213.94" lengthAdjust="spacingAndGlyphs">Publications: Sequences in Scientific Articles</text>
<text x="86.56" y="344.7" fill="#000" font-size="14" textLength="64.77" lengthAdjust="spacingAndGlyphs">Sequences</text>
<path d="M156 340.5H950" stroke="#000" stroke-width="1" fill="none"/>
<text x="117.54" y="360.7" fill="#000" font-size="14" textLength="33.73" lengthAdjust="spacingAndGlyphs">SNPs</text>
<text x="368.12" y="377.6" fill="#006400" font-size="14" textLength="369.09" lengthAdjust="spacingAndGlyphs">OMIM Gene Phenotypes - Dark Green Can Be Disease-causing</text>
<text x="73.77" y="391.7" fill="#006400" font-size="14" textLength="77.52" lengthAdjust="spacingAndGlyphs">OMIM Genes</text>
<rect x="156" y="380" width="794" height="15" fill="#005000"/>
<text x="436.12" y="408.0" fill="#000" font-size="10.9" textLength="231.66" lengthAdjust="spacingAndGlyphs">Short Genetic Variants from dbSNP release 155</text>
<text x="26.04" y="422.7" fill="#000" font-size="14" textLength="126.15" lengthAdjust="spacingAndGlyphs">Common dbSNP(155)</text>
<text x="265.92" y="439.8" fill="#000" font-size="14" textLength="572.13" lengthAdjust="spacingAndGlyphs">Gene Expression in 54 tissues from GTEx RNA-seq of 17382 samples, 948 donors (V8, Aug 2019)</text>
<text x="117.36" y="476.7" fill="#000" font-size="14" textLength="34.19" lengthAdjust="spacingAndGlyphs">TNXB</text>
<rect x="156.5" y="443.5" width="377" height="54" fill="#fff" stroke="#f4f4f4" stroke-width="1"/>
<rect x="156" y="447" width="5" height="50" fill="#FFA54F"/>
<rect x="163" y="451" width="5" height="46" fill="#EE9A00"/>
<rect x="170" y="458" width="5" height="39" fill="#8FBC8F"/>
<rect x="177" y="456" width="5" height="41" fill="#8B1C62"/>
<rect x="184" y="453" width="5" height="44" fill="#EE6A50"/>
<rect x="191" y="458" width="5" height="39" fill="#FF0000"/>
<rect x="198" y="456" width="5" height="41" fill="#CDB79E"/>
<rect x="205" y="488" width="5" height="9" fill="#EEEE00"/>
<rect x="212" y="485" width="5" height="12" fill="#EEEE00"/>
<rect x="219" y="483" width="5" height="14" fill="#EEEE00"/>
<rect x="226" y="459" width="5" height="38" fill="#EEEE00"/>
<rect x="233" y="457" width="5" height="40" fill="#EEEE00"/>
<rect x="240" y="479" width="5" height="18" fill="#EEEE00"/>
<rect x="247" y="482" width="5" height="15" fill="#EEEE00"/>
<rect x="254" y="488" width="5" height="9" fill="#EEEE00"/>
<rect x="261" y="483" width="5" height="14" fill="#EEEE00"/>
<rect x="268" y="482" width="5" height="15" fill="#EEEE00"/>
<rect x="275" y="485" width="5" height="12" fill="#EEEE00"/>
<rect x="282" y="485" width="5" height="12" fill="#EEEE00"/>
<rect x="289" y="486" width="5" height="11" fill="#EEEE00"/>
<rect x="296" y="453" width="5" height="44" fill="#00CDCD"/>
<rect x="303" y="493" width="5" height="4" fill="#EE82EE"/>
<rect x="310" y="477" width="5" height="20" fill="#9AC0CD"/>
<rect x="317" y="449" width="5" height="48" fill="#EED5D2"/>
<rect x="324" y="446" width="5" height="51" fill="#EED5D2"/>
<rect x="331" y="455" width="5" height="42" fill="#CDB79E"/>
<rect x="338" y="463" width="5" height="34" fill="#EEC591"/>
<rect x="345" y="450" width="5" height="47" fill="#8B7355"/>
<rect x="352" y="468" width="5" height="29" fill="#8B7355"/>
<rect x="359" y="451" width="5" height="46" fill="#CDAA7D"/>
<rect x="366" y="450" width="5" height="47" fill="#EED5D2"/>
<rect x="373" y="452" width="5" height="45" fill="#B452CD"/>
<rect x="380" y="466" width="5" height="31" fill="#7A378B"/>
<rect x="387" y="479" width="5" height="18" fill="#CDB79E"/>
<rect x="394" y="476" width="5" height="21" fill="#CDB79E"/>
<rect x="401" y="484" width="5" height="13" fill="#CDB79E"/>
<rect x="408" y="449" width="5" height="48" fill="#9ACD32"/>
<rect x="415" y="468" width="5" height="29" fill="#CDB79E"/>
<rect x="422" y="476" width="5" height="21" fill="#7A67EE"/>
<rect x="429" y="446" width="5" height="51" fill="#FFD700"/>
<rect x="436" y="444" width="5" height="53" fill="#FFB6C1"/>
<rect x="443" y="488" width="5" height="9" fill="#CD9B1D"/>
<rect x="450" y="478" width="5" height="19" fill="#B4EEB4"/>
<rect x="457" y="468" width="5" height="29" fill="#D9D9D9"/>
<rect x="464" y="462" width="5" height="35" fill="#3A5FCD"/>
<rect x="471" y="459" width="5" height="38" fill="#1E90FF"/>
<rect x="478" y="459" width="5" height="38" fill="#CDB79E"/>
<rect x="485" y="466" width="5" height="31" fill="#CDB79E"/>
<rect x="492" y="469" width="5" height="28" fill="#FFD39B"/>
<rect x="499" y="469" width="5" height="28" fill="#A6A6A6"/>
<rect x="506" y="457" width="5" height="40" fill="#008B45"/>
<rect x="513" y="443" width="5" height="54" fill="#EED5D2"/>
<rect x="520" y="455" width="5" height="42" fill="#EED5D2"/>
<rect x="527" y="494" width="5" height="3" fill="#FF00FF"/>
<rect x="156" y="498" width="794" height="2" fill="#000064"/>
<text x="281.30" y="514.6" fill="#000" font-size="14" textLength="541.31" lengthAdjust="spacingAndGlyphs">H3K27Ac Mark (Often Found Near Active Regulatory Elements) on 7 cell lines from ENCODE</text>
<text x="12.72" y="528.8" fill="#000" font-size="14" textLength="104.54" lengthAdjust="spacingAndGlyphs">Layered H3K27Ac</text>
<rect x="156" y="541" width="794" height="3" fill="#ff78d2"/>
<rect x="156" y="544" width="794" height="1.2" fill="#8a3c9c"/>
<rect x="156" y="545.2" width="794" height="1.6" fill="#0c0c34"/>
<text x="405.56" y="560.5" fill="#3c3c8c" font-size="14" textLength="293.01" lengthAdjust="spacingAndGlyphs">100 vertebrates Basewise Conservation by PhyloP</text>
<text x="116.11" y="560" fill="#3c3c8c" font-size="14" textLength="24.91" lengthAdjust="spacingAndGlyphs">4.88</text>
<text x="145.10" y="559" fill="#3c3c8c" font-size="14" textLength="7.23" lengthAdjust="spacingAndGlyphs">_</text>
<text x="13.39" y="584.8" fill="#3c3c8c" font-size="14" textLength="85.83" lengthAdjust="spacingAndGlyphs">100 Vert. Cons</text>
<text x="119.34" y="610" fill="#8c2828" font-size="14" textLength="21.44" lengthAdjust="spacingAndGlyphs">-4.5</text>
<text x="145.10" y="609" fill="#8c2828" font-size="14" textLength="7.23" lengthAdjust="spacingAndGlyphs">_</text>
<rect x="168" y="589" width="38" height="1" fill="#b4ffb4"/>
<rect x="184" y="589" width="6" height="2" fill="#00ff00"/>
<path d="M170.3 592.1L174 591.3L180 591.1V593.1L174 592.9Z" fill="#1414ff"/>
<path d="M180 591.1H205V591.7H180ZM180 592.5H206V593.1H180Z" fill="#7878ff"/>
<path d="M194 591.7H206V592.2H194Z" fill="#b4b4ff"/>
<path d="M203 591.1L207 591.5L212.8 592.4V593.5L206 593.2L203 593.1Z" fill="#0a0aff"/>
<rect x="241" y="589" width="38" height="1" fill="#b4ffb4"/>
<rect x="257" y="589" width="6" height="3" fill="#00ff00"/>
<text class="logo" transform="translate(312.37 587.80) scale(0.6371 0.1105)" x="0" y="0" font-size="100" fill="#a09600">C</text>
<text class="logo" transform="translate(384.68 593.80) scale(0.6339 0.0698)" x="0" y="0" font-size="100" fill="#a09600">C</text>
<rect x="385" y="594" width="38" height="1" fill="#c8ffc8"/>
<rect x="401" y="594" width="6" height="1.6" fill="#00ff00"/>
<text class="logo" transform="translate(457.36 591.80) scale(0.6114 0.0422)" x="0" y="0" font-size="100" fill="#ff0000">A</text>
<rect x="460" y="592" width="37" height="1" fill="#ecebc4"/>
<rect x="531" y="587" width="43" height="1" fill="#b4b4ff"/>
<rect x="531" y="587" width="9" height="1" fill="#5050ff"/>
<rect x="564" y="587" width="10" height="1" fill="#5050ff"/>
<rect x="673" y="589" width="38" height="1" fill="#00ff00"/>
<rect x="689" y="589" width="6" height="7" fill="#00ff00"/>
<rect x="676" y="596" width="42" height="1.1" fill="#7070ff"/>
<rect x="676" y="596" width="8" height="1.1" fill="#2020ff"/>
<rect x="708" y="596" width="10" height="1.1" fill="#2020ff"/>
<rect x="678" y="597" width="36" height="0.7" fill="#dcd480"/>
<text class="logo" transform="translate(744.63 593.20) scale(0.6441 0.0640)" x="0" y="0" font-size="100" fill="#0000ff">G</text>
<text class="logo" transform="translate(816.27 594.60) scale(0.6371 0.0814)" x="0" y="0" font-size="100" fill="#a09600">C</text>
<rect x="817" y="595" width="38" height="1" fill="#c8ffc8"/>
<rect x="833" y="595" width="6" height="2" fill="#00ff00"/>
<text x="444.90" y="626.9" fill="#0c0c78" font-size="14" textLength="214.46" lengthAdjust="spacingAndGlyphs">Multiz Alignments of 100 Vertebrates</text>
<text x="120.98" y="640.5" fill="#e68a00" font-size="14" textLength="30.21" lengthAdjust="spacingAndGlyphs">Gaps</text>
<text x="110.64" y="655.7" fill="#0c0c78" font-size="14" textLength="41.45" lengthAdjust="spacingAndGlyphs">Human</text>
<text x="184.94" y="655.7" fill="#0c0c78" font-size="14" textLength="10.11" lengthAdjust="spacingAndGlyphs">G</text>
<text x="258.03" y="655.7" fill="#0c0c78" font-size="14" textLength="7.94" lengthAdjust="spacingAndGlyphs">T</text>
<text x="330.01" y="655.7" fill="#0c0c78" font-size="14" textLength="9.39" lengthAdjust="spacingAndGlyphs">C</text>
<text x="401.91" y="655.7" fill="#0c0c78" font-size="14" textLength="9.39" lengthAdjust="spacingAndGlyphs">C</text>
<text x="474.06" y="655.7" fill="#0c0c78" font-size="14" textLength="8.67" lengthAdjust="spacingAndGlyphs">A</text>
<text x="544.94" y="655.7" fill="#0c0c78" font-size="14" textLength="10.11" lengthAdjust="spacingAndGlyphs">G</text>
<text x="616.94" y="655.7" fill="#0c0c78" font-size="14" textLength="10.11" lengthAdjust="spacingAndGlyphs">G</text>
<text x="690.03" y="655.7" fill="#0c0c78" font-size="14" textLength="7.94" lengthAdjust="spacingAndGlyphs">T</text>
<text x="760.94" y="655.7" fill="#0c0c78" font-size="14" textLength="10.11" lengthAdjust="spacingAndGlyphs">G</text>
<text x="834.03" y="655.7" fill="#0c0c78" font-size="14" textLength="7.94" lengthAdjust="spacingAndGlyphs">T</text>
<text x="907.03" y="655.7" fill="#0c0c78" font-size="14" textLength="7.94" lengthAdjust="spacingAndGlyphs">T</text>
<text x="107.84" y="670.7" fill="#0c0c78" font-size="14" textLength="43.42" lengthAdjust="spacingAndGlyphs">Rhesus</text>
<text x="184.94" y="670.7" fill="#0c0c78" font-size="14" textLength="10.11" lengthAdjust="spacingAndGlyphs">G</text>
<text x="258.03" y="670.7" fill="#0c0c78" font-size="14" textLength="7.94" lengthAdjust="spacingAndGlyphs">T</text>
<text x="330.01" y="670.7" fill="#0c0c78" font-size="14" textLength="9.39" lengthAdjust="spacingAndGlyphs">C</text>
<text x="401.91" y="670.7" fill="#0c0c78" font-size="14" textLength="9.39" lengthAdjust="spacingAndGlyphs">C</text>
<text x="474.06" y="670.7" fill="#0c0c78" font-size="14" textLength="8.67" lengthAdjust="spacingAndGlyphs">A</text>
<text x="544.94" y="670.7" fill="#0c0c78" font-size="14" textLength="10.11" lengthAdjust="spacingAndGlyphs">G</text>
<text x="616.94" y="670.7" fill="#0c0c78" font-size="14" textLength="10.11" lengthAdjust="spacingAndGlyphs">G</text>
<text x="690.03" y="670.7" fill="#0c0c78" font-size="14" textLength="7.94" lengthAdjust="spacingAndGlyphs">T</text>
<text x="760.94" y="670.7" fill="#0c0c78" font-size="14" textLength="10.11" lengthAdjust="spacingAndGlyphs">G</text>
<text x="833.31" y="670.7" fill="#8c8cc0" font-size="14" textLength="9.39" lengthAdjust="spacingAndGlyphs">C</text>
<text x="907.03" y="670.7" fill="#0c0c78" font-size="14" textLength="7.94" lengthAdjust="spacingAndGlyphs">T</text>
<text x="112.88" y="685.7" fill="#006400" font-size="14" textLength="39.08" lengthAdjust="spacingAndGlyphs">Mouse</text>
<text x="187.84" y="685.7" fill="#8c8cc0" font-size="14" textLength="4.33" lengthAdjust="spacingAndGlyphs">-</text>
<text x="259.84" y="685.7" fill="#8c8cc0" font-size="14" textLength="4.33" lengthAdjust="spacingAndGlyphs">-</text>
<text x="332.54" y="685.7" fill="#8c8cc0" font-size="14" textLength="4.33" lengthAdjust="spacingAndGlyphs">-</text>
<text x="404.44" y="685.7" fill="#8c8cc0" font-size="14" textLength="4.33" lengthAdjust="spacingAndGlyphs">-</text>
<text x="476.24" y="685.7" fill="#8c8cc0" font-size="14" textLength="4.33" lengthAdjust="spacingAndGlyphs">-</text>
<text x="547.84" y="685.7" fill="#8c8cc0" font-size="14" textLength="4.33" lengthAdjust="spacingAndGlyphs">-</text>
<text x="619.84" y="685.7" fill="#8c8cc0" font-size="14" textLength="4.33" lengthAdjust="spacingAndGlyphs">-</text>
<text x="691.84" y="685.7" fill="#8c8cc0" font-size="14" textLength="4.33" lengthAdjust="spacingAndGlyphs">-</text>
<text x="763.84" y="685.7" fill="#8c8cc0" font-size="14" textLength="4.33" lengthAdjust="spacingAndGlyphs">-</text>
<text x="835.84" y="685.7" fill="#8c8cc0" font-size="14" textLength="4.33" lengthAdjust="spacingAndGlyphs">-</text>
<text x="908.84" y="685.7" fill="#8c8cc0" font-size="14" textLength="4.33" lengthAdjust="spacingAndGlyphs">-</text>
<text x="128.96" y="700.7" fill="#0c0c78" font-size="14" textLength="23.26" lengthAdjust="spacingAndGlyphs">Dog</text>
<text x="186.03" y="700.7" fill="#8c8cc0" font-size="14" textLength="7.94" lengthAdjust="spacingAndGlyphs">T</text>
<text x="258.03" y="700.7" fill="#0c0c78" font-size="14" textLength="7.94" lengthAdjust="spacingAndGlyphs">T</text>
<text x="330.01" y="700.7" fill="#0c0c78" font-size="14" textLength="9.39" lengthAdjust="spacingAndGlyphs">C</text>
<text x="401.91" y="700.7" fill="#0c0c78" font-size="14" textLength="9.39" lengthAdjust="spacingAndGlyphs">C</text>
<text x="474.06" y="700.7" fill="#0c0c78" font-size="14" textLength="8.67" lengthAdjust="spacingAndGlyphs">A</text>
<text x="544.94" y="700.7" fill="#0c0c78" font-size="14" textLength="10.11" lengthAdjust="spacingAndGlyphs">G</text>
<text x="616.94" y="700.7" fill="#0c0c78" font-size="14" textLength="10.11" lengthAdjust="spacingAndGlyphs">G</text>
<text x="690.03" y="700.7" fill="#0c0c78" font-size="14" textLength="7.94" lengthAdjust="spacingAndGlyphs">T</text>
<text x="760.94" y="700.7" fill="#0c0c78" font-size="14" textLength="10.11" lengthAdjust="spacingAndGlyphs">G</text>
<text x="833.31" y="700.7" fill="#8c8cc0" font-size="14" textLength="9.39" lengthAdjust="spacingAndGlyphs">C</text>
<text x="907.03" y="700.7" fill="#0c0c78" font-size="14" textLength="7.94" lengthAdjust="spacingAndGlyphs">T</text>
<text x="100.85" y="715.7" fill="#006400" font-size="14" textLength="50.15" lengthAdjust="spacingAndGlyphs">Elephant</text>
<text x="187.84" y="715.7" fill="#8c8cc0" font-size="14" textLength="4.33" lengthAdjust="spacingAndGlyphs">-</text>
<text x="259.84" y="715.7" fill="#8c8cc0" font-size="14" textLength="4.33" lengthAdjust="spacingAndGlyphs">-</text>
<text x="332.54" y="715.7" fill="#8c8cc0" font-size="14" textLength="4.33" lengthAdjust="spacingAndGlyphs">-</text>
<text x="404.44" y="715.7" fill="#8c8cc0" font-size="14" textLength="4.33" lengthAdjust="spacingAndGlyphs">-</text>
<text x="476.24" y="715.7" fill="#8c8cc0" font-size="14" textLength="4.33" lengthAdjust="spacingAndGlyphs">-</text>
<text x="547.84" y="715.7" fill="#8c8cc0" font-size="14" textLength="4.33" lengthAdjust="spacingAndGlyphs">-</text>
<text x="619.84" y="715.7" fill="#8c8cc0" font-size="14" textLength="4.33" lengthAdjust="spacingAndGlyphs">-</text>
<text x="691.84" y="715.7" fill="#8c8cc0" font-size="14" textLength="4.33" lengthAdjust="spacingAndGlyphs">-</text>
<text x="763.84" y="715.7" fill="#8c8cc0" font-size="14" textLength="4.33" lengthAdjust="spacingAndGlyphs">-</text>
<text x="835.84" y="715.7" fill="#8c8cc0" font-size="14" textLength="4.33" lengthAdjust="spacingAndGlyphs">-</text>
<text x="906.31" y="715.7" fill="#8c8cc0" font-size="14" textLength="9.39" lengthAdjust="spacingAndGlyphs">C</text>
<text x="105.18" y="730.7" fill="#006400" font-size="14" textLength="47.02" lengthAdjust="spacingAndGlyphs">Chicken</text>
<text x="186.20" y="732.7" fill="#8c8cc0" font-size="14" textLength="7.59" lengthAdjust="spacingAndGlyphs">=</text>
<text x="258.20" y="732.7" fill="#8c8cc0" font-size="14" textLength="7.59" lengthAdjust="spacingAndGlyphs">=</text>
<text x="330.90" y="732.7" fill="#8c8cc0" font-size="14" textLength="7.59" lengthAdjust="spacingAndGlyphs">=</text>
<text x="402.80" y="732.7" fill="#8c8cc0" font-size="14" textLength="7.59" lengthAdjust="spacingAndGlyphs">=</text>
<text x="474.60" y="732.7" fill="#8c8cc0" font-size="14" textLength="7.59" lengthAdjust="spacingAndGlyphs">=</text>
<text x="546.20" y="732.7" fill="#8c8cc0" font-size="14" textLength="7.59" lengthAdjust="spacingAndGlyphs">=</text>
<text x="618.20" y="732.7" fill="#8c8cc0" font-size="14" textLength="7.59" lengthAdjust="spacingAndGlyphs">=</text>
<text x="690.20" y="732.7" fill="#8c8cc0" font-size="14" textLength="7.59" lengthAdjust="spacingAndGlyphs">=</text>
<text x="762.20" y="732.7" fill="#8c8cc0" font-size="14" textLength="7.59" lengthAdjust="spacingAndGlyphs">=</text>
<text x="834.20" y="732.7" fill="#8c8cc0" font-size="14" textLength="7.59" lengthAdjust="spacingAndGlyphs">=</text>
<text x="907.20" y="732.7" fill="#8c8cc0" font-size="14" textLength="7.59" lengthAdjust="spacingAndGlyphs">=</text>
<text x="83.89" y="745.7" fill="#0c0c78" font-size="14" textLength="67.42" lengthAdjust="spacingAndGlyphs">X<tspan dy="-1">_</tspan><tspan dy="1">tropicalis</tspan></text>
<text x="186.20" y="747.7" fill="#8c8cc0" font-size="14" textLength="7.59" lengthAdjust="spacingAndGlyphs">=</text>
<text x="258.20" y="747.7" fill="#8c8cc0" font-size="14" textLength="7.59" lengthAdjust="spacingAndGlyphs">=</text>
<text x="330.90" y="747.7" fill="#8c8cc0" font-size="14" textLength="7.59" lengthAdjust="spacingAndGlyphs">=</text>
<text x="402.80" y="747.7" fill="#8c8cc0" font-size="14" textLength="7.59" lengthAdjust="spacingAndGlyphs">=</text>
<text x="474.60" y="747.7" fill="#8c8cc0" font-size="14" textLength="7.59" lengthAdjust="spacingAndGlyphs">=</text>
<text x="546.20" y="747.7" fill="#8c8cc0" font-size="14" textLength="7.59" lengthAdjust="spacingAndGlyphs">=</text>
<text x="618.20" y="747.7" fill="#8c8cc0" font-size="14" textLength="7.59" lengthAdjust="spacingAndGlyphs">=</text>
<text x="690.20" y="747.7" fill="#8c8cc0" font-size="14" textLength="7.59" lengthAdjust="spacingAndGlyphs">=</text>
<text x="762.20" y="747.7" fill="#8c8cc0" font-size="14" textLength="7.59" lengthAdjust="spacingAndGlyphs">=</text>
<text x="834.20" y="747.7" fill="#8c8cc0" font-size="14" textLength="7.59" lengthAdjust="spacingAndGlyphs">=</text>
<text x="907.20" y="747.7" fill="#8c8cc0" font-size="14" textLength="7.59" lengthAdjust="spacingAndGlyphs">=</text>
<text x="98.05" y="760.7" fill="#006400" font-size="14" textLength="54.16" lengthAdjust="spacingAndGlyphs">Zebrafish</text>
<text x="441.06" y="776.8" fill="#000" font-size="14" textLength="222.63" lengthAdjust="spacingAndGlyphs">Repeating Elements by RepeatMasker</text>
<text x="67.91" y="790.7" fill="#000" font-size="14" textLength="83.52" lengthAdjust="spacingAndGlyphs">RepeatMasker</text>
<rect x="949" y="0" width="1" height="810" fill="#fff"/>
</svg>
</body>
</html>
